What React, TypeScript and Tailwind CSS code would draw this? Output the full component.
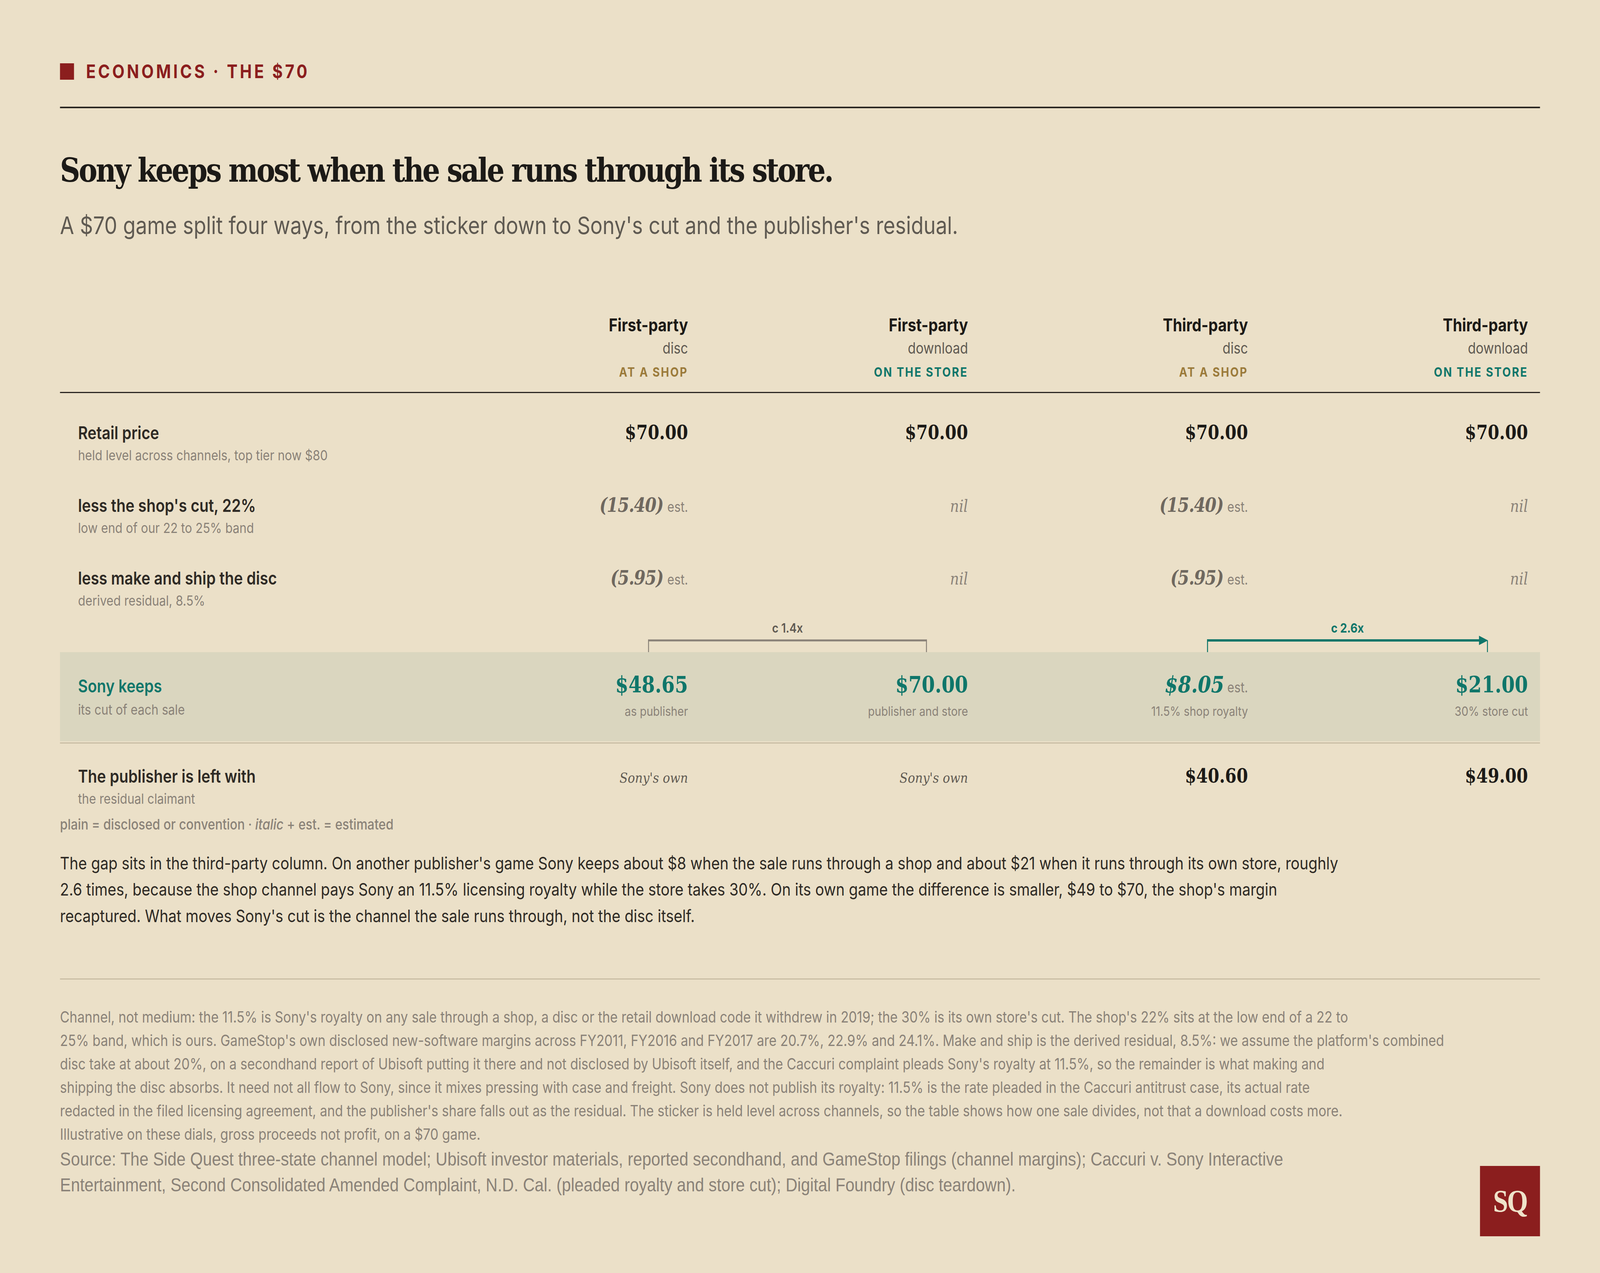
import { useEffect, useState } from 'react';

// display serif for the headline and the figures, a plain one for the mark
const display = "font-['DejaVu_Serif',serif]";
const serif = "font-['Liberation_Serif','Times_New_Roman',serif]";

type Cell = {
  value: string;
  kind: 'plain' | 'est' | 'nil' | 'own';
};

const columns = [
  { party: 'First-party', medium: 'disc', channel: 'AT A SHOP', tone: 'text-[#9b7b3b]' },
  { party: 'First-party', medium: 'download', channel: 'ON THE STORE', tone: 'text-[#0f766a]' },
  { party: 'Third-party', medium: 'disc', channel: 'AT A SHOP', tone: 'text-[#9b7b3b]' },
  { party: 'Third-party', medium: 'download', channel: 'ON THE STORE', tone: 'text-[#0f766a]' },
];

const rows: { label: string; note: string; cells: Cell[] }[] = [
  {
    label: 'Retail price',
    note: 'held level across channels, top tier now $80',
    cells: [
      { value: '$70.00', kind: 'plain' },
      { value: '$70.00', kind: 'plain' },
      { value: '$70.00', kind: 'plain' },
      { value: '$70.00', kind: 'plain' },
    ],
  },
  {
    label: "less the shop's cut, 22%",
    note: 'low end of our 22 to 25% band',
    cells: [
      { value: '(15.40)', kind: 'est' },
      { value: 'nil', kind: 'nil' },
      { value: '(15.40)', kind: 'est' },
      { value: 'nil', kind: 'nil' },
    ],
  },
  {
    label: 'less make and ship the disc',
    note: 'derived residual, 8.5%',
    cells: [
      { value: '(5.95)', kind: 'est' },
      { value: 'nil', kind: 'nil' },
      { value: '(5.95)', kind: 'est' },
      { value: 'nil', kind: 'nil' },
    ],
  },
];

const sonyKeeps = [
  { value: '$48.65', note: 'as publisher', est: false },
  { value: '$70.00', note: 'publisher and store', est: false },
  { value: '$8.05', note: '11.5% shop royalty', est: true },
  { value: '$21.00', note: '30% store cut', est: false },
];

const publisherLeft: Cell[] = [
  { value: "Sony's own", kind: 'own' },
  { value: "Sony's own", kind: 'own' },
  { value: '$40.60', kind: 'plain' },
  { value: '$49.00', kind: 'plain' },
];

const grid = 'grid grid-cols-[360px_repeat(4,280px)]';

// keeps the value cell's own strut below the label's baseline
const valueCell = 'pr-[12px] text-right text-[12px] leading-[14px]';

function ValueCell({ cell }: { cell: Cell }) {
  if (cell.kind === 'plain') {
    return <span className={`${display} text-[16.5px] font-bold leading-[16px] text-[#1c1a17]`}>{cell.value}</span>;
  }
  if (cell.kind === 'est') {
    return (
      <span>
        <span className={`${display} text-[16.5px] font-bold italic leading-[16px] tracking-[-0.03em] text-[#6f685f]`}>{cell.value}</span>
        <span className="ml-[4px] text-[12px] text-[#8a8278]">est.</span>
      </span>
    );
  }
  if (cell.kind === 'nil') {
    return <span className={`${display} text-[14px] italic leading-[16px] text-[#8a8278]`}>{cell.value}</span>;
  }
  return <span className={`${display} text-[12px] italic leading-[16px] text-[#5f5a52]`}>{cell.value}</span>;
}

function RowLabel({ label, note }: { label: string; note: string }) {
  return (
    <div className="pl-[18px]">
      <div className="text-[15px] font-semibold leading-[20px] text-[#2e2a25]">{label}</div>
      <div className="mt-[1px] text-[12px] leading-[16px] text-[#8a8278]">{note}</div>
    </div>
  );
}

// the sheet is drawn at 1600 x 1086 and stretched to the real window
const measure = () =>
  typeof document === 'undefined'
    ? { x: 3, y: 3 }
    : { x: document.documentElement.clientWidth / 1600, y: window.innerHeight / 1086 };

export default function App() {
  const [fit, setFit] = useState(measure);

  useEffect(() => {
    const onResize = () => setFit(measure());
    onResize();
    window.addEventListener('resize', onResize);
    return () => window.removeEventListener('resize', onResize);
  }, []);

  return (
    <div className="h-screen w-full overflow-hidden bg-[#ebe0c8]">
      <div
        style={{ zoom: fit.y, transform: `scaleX(${fit.x / fit.y})` }}
        className="h-[1086px] w-[1600px] origin-top-left bg-[#ebe0c8] px-[60px] pt-[51px] font-['Inter','Noto_Sans',sans-serif]"
      >
        {/* kicker */}
        <div className="flex h-[20px] items-center gap-[12px]">
          <div className="h-[14px] w-[14px] bg-[#8b1e1e]" />
          <div className="text-[16px] font-bold leading-[20px] tracking-[0.145em] text-[#8b1e1e]">ECONOMICS · THE $70</div>
        </div>
        <div className="mt-[20px] h-[1.3px] bg-[#2a2622]" />

        <h1 className={`${display} mt-[35px] text-[28px] font-bold leading-[36px] tracking-[-0.055em] text-[#1c1a17]`}>
          Sony keeps most when the sale runs through its store.
        </h1>
        <p className="mt-[15px] text-[20.5px] leading-[28px] text-[#5f5a52]">
          A $70 game split four ways, from the sticker down to Sony's cut and the publisher's residual.
        </p>

        {/* table head */}
        <div className={`${grid} mt-[61px] border-b border-[#2a2622] pb-[9px]`}>
          <div />
          {columns.map((c, i) => (
            <div key={i} className="pr-[12px] text-right">
              <div className="text-[15px] font-bold leading-[20px] text-[#1c1a17]">{c.party}</div>
              <div className="text-[13px] leading-[19px] text-[#5f5a52]">{c.medium}</div>
              <div className={`mt-[3px] text-[11px] font-bold leading-[16px] tracking-[0.1em] ${c.tone}`}>{c.channel}</div>
            </div>
          ))}
        </div>

        {/* body rows */}
        <div className="flex flex-col gap-[25px] pt-[24px]">
          {rows.map((r) => (
            <div key={r.label} className={`${grid} items-baseline`}>
              <RowLabel label={r.label} note={r.note} />
              {r.cells.map((c, i) => (
                <div key={i} className={valueCell}>
                  <ValueCell cell={c} />
                </div>
              ))}
            </div>
          ))}
        </div>

        {/* ratio brackets */}
        <div className={`${grid} h-[36px]`}>
          <div className="col-start-2 col-span-2 pl-[228px] pr-[53px] pt-[9px]">
            <div className="text-center text-[11px] font-semibold leading-[13px] text-[#5f5a52]">c 1.4x</div>
            <svg width="279" height="14" viewBox="0 0 279 14" className="block">
              <path d="M0.5 14 V4 M278.5 14 V4" stroke="#8a8278" strokeWidth="1" fill="none" />
              <path d="M0 4 H279" stroke="#8a8278" strokeWidth="1.6" />
            </svg>
          </div>
          <div className="col-start-4 col-span-2 pl-[227px] pr-[52px] pt-[9px]">
            <div className="text-center text-[11px] font-bold leading-[13px] text-[#0f766a]">c 2.6x</div>
            <svg width="281" height="14" viewBox="0 0 281 14" className="block">
              <path d="M0.5 14 V4 M280.5 14 V4" stroke="#0f766a" strokeWidth="1" fill="none" />
              <path d="M0 4 H275" stroke="#0f766a" strokeWidth="2" />
              <path d="M272 0 L281 4 L272 8 Z" fill="#0f766a" />
            </svg>
          </div>
        </div>

        {/* Sony keeps band */}
        <div className={`${grid} h-[76px] items-baseline bg-[#dad6bf] pt-[19px]`}>
          <div className="pl-[18px]">
            <div className="text-[15px] font-semibold leading-[20px] text-[#0f766a]">Sony keeps</div>
            <div className="mt-[2px] text-[12px] leading-[16px] text-[#8a8278]">its cut of each sale</div>
          </div>
          {sonyKeeps.map((s, i) => (
            <div key={i} className={valueCell}>
              <div className="leading-[16px]">
                <span className={`${display} text-[19px] font-bold text-[#0f766a] ${s.est ? 'italic' : ''}`}>{s.value}</span>
                {s.est && <span className="ml-[3px] text-[12px] text-[#8a8278]">est.</span>}
              </div>
              <div className="mt-[5px] text-[11px] leading-[15px] text-[#8a8278]">{s.note}</div>
            </div>
          ))}
        </div>
        <div className="mt-[1px] h-px bg-[#c9bda4]" />

        {/* publisher row */}
        <div className={`${grid} items-baseline pt-[18px]`}>
          <RowLabel label="The publisher is left with" note="the residual claimant" />
          {publisherLeft.map((c, i) => (
            <div key={i} className={valueCell}>
              <ValueCell cell={c} />
            </div>
          ))}
        </div>

        <div className="mt-[6px] text-[12.4px] font-medium leading-[16px] text-[#8a8278]">
          plain = disclosed or convention · <span className="italic">italic</span> + est. = estimated
        </div>

        <p className="mt-[14px] text-[14.8px] leading-[22.5px] text-[#2e2a25]">
          The gap sits in the third-party column. On another publisher's game Sony keeps about $8 when the sale runs through a shop and about $21 when it runs through its own store, roughly
          <br />
          2.6 times, because the shop channel pays Sony an 11.5% licensing royalty while the store takes 30%. On its own game the difference is smaller, $49 to $70, the shop's margin
          <br />
          recaptured. What moves Sony's cut is the channel the sale runs through, not the disc itself.
        </p>

        <div className="mt-[42px] h-px bg-[#c9bda4]" />

        <p className="mt-[22px] text-[13.1px] leading-[20px] text-[#8a8278]">
          Channel, not medium: the 11.5% is Sony's royalty on any sale through a shop, a disc or the retail download code it withdrew in 2019; the 30% is its own store's cut. The shop's 22% sits at the low end of a 22 to
          <br />
          25% band, which is ours. GameStop's own disclosed new-software margins across FY2011, FY2016 and FY2017 are 20.7%, 22.9% and 24.1%. Make and ship is the derived residual, 8.5%: we assume the platform's combined
          <br />
          disc take at about 20%, on a secondhand report of Ubisoft putting it there and not disclosed by Ubisoft itself, and the Caccuri complaint pleads Sony's royalty at 11.5%, so the remainder is what making and
          <br />
          shipping the disc absorbs. It need not all flow to Sony, since it mixes pressing with case and freight. Sony does not publish its royalty: 11.5% is the rate pleaded in the Caccuri antitrust case, its actual rate
          <br />
          redacted in the filed licensing agreement, and the publisher's share falls out as the residual. The sticker is held level across channels, so the table shows how one sale divides, not that a download costs more.
          <br />
          Illustrative on these dials, gross proceeds not profit, on a $70 game.
        </p>

        <div className="flex items-start justify-between">
          <p className="font-['Liberation_Sans',Arial,sans-serif] text-[16.3px] leading-[22px] text-[#8a8278]">
            Source: The Side Quest three-state channel model; Ubisoft investor materials, reported secondhand, and GameStop filings (channel margins); Caccuri v. Sony Interactive
            <br />
            Entertainment, Second Consolidated Amended Complaint, N.D. Cal. (pleaded royalty and store cut); Digital Foundry (disc teardown).
          </p>
          <div className={`${serif} mt-[17px] flex h-[60px] w-[60px] items-center justify-center bg-[#8b1e1e] text-[27px] font-bold tracking-[-0.04em] text-[#efe3ca]`}>
            SQ
          </div>
        </div>
      </div>
    </div>
  );
}
